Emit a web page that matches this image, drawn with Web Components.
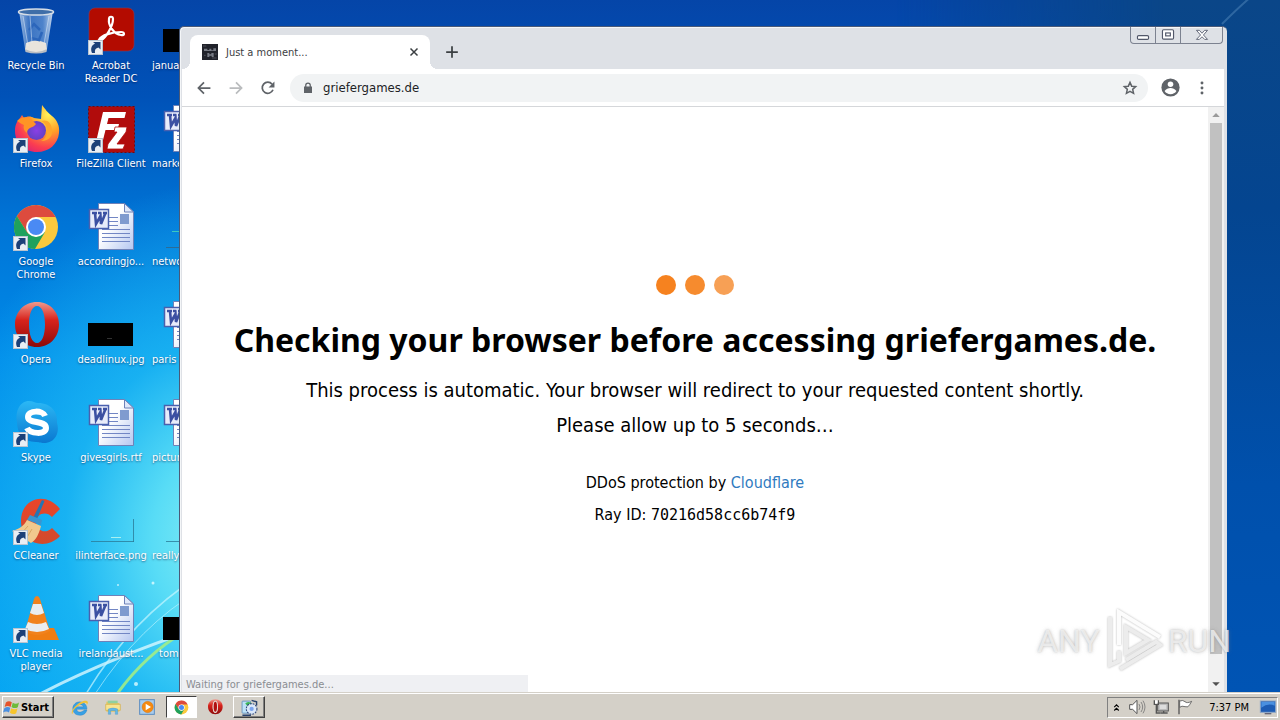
<!DOCTYPE html>
<html lang="en">
<head>
<meta charset="utf-8">
<title>Desktop</title>
<style>
html,body{margin:0;height:100%;overflow:hidden}
body{font-family:"Noto Sans",sans-serif}
</style>
</head>
<body>
<desk-top></desk-top>
<script>
const UI = '"DejaVu Sans Condensed","Noto Sans",sans-serif';
const ARROW = `<g><rect x="1.5" y="33.5" width="14" height="14" fill="#e9eef4" stroke="#b9c4d0"/><path d="M5 46c-2-5 0-8 3-9.500l-2-1.500h7.500v7.500l-2-2c-3 .5-4 2.500-3.500 5.500z" fill="#1c4078"/></g>`;
const CHROME = `<circle cx="24" cy="24" r="22" fill="#fbc93d"/><path d="M24 14H43.600A22 22 0 0 0 4.900 13L15.500 30z" fill="#dd4b3e"/><path d="M4.900 13A22 22 0 0 0 23 46L33 29 24 34 15.500 30z" fill="#1fa15d"/><circle cx="24" cy="24" r="10" fill="#fff"/><circle cx="24" cy="24" r="8" fill="#4a8af4"/>`;
const OPERA = `<defs><linearGradient id="o" x2="0" y2="1"><stop offset="0" stop-color="#f0998c"/><stop offset=".4" stop-color="#d8231c"/><stop offset="1" stop-color="#8d0a0a"/></linearGradient></defs><path fill-rule="evenodd" fill="url(#o)" d="M25 1c13 0 22 10 22 22.500S38 46 25 46 3 36 3 23.500 12 1 25 1zm0 4c-5 0-8 8-8 18.500S20 42 25 42s8-8 8-18.500S30 5 25 5z"/>`;
const ICONS = {
bin:`<defs><linearGradient id="g"><stop offset="0" stop-color="#cfe0f2" stop-opacity=".8"/><stop offset=".3" stop-color="#5f8fd0" stop-opacity=".6"/><stop offset=".7" stop-color="#7faadf" stop-opacity=".6"/><stop offset="1" stop-color="#e4edf6" stop-opacity=".9"/></linearGradient></defs><path d="M7 4h34l-6 38q-11 6-22 0z" fill="url(#g)"/><path d="M14 36q10-5 20 0l1 7q-11 5-22 0z" fill="#e8e4dc"/><path d="M13 42q11 6 22 0l-.500 3q-10 3-21 0z" fill="#b8bcc2"/><ellipse cx="24" cy="5" rx="17.500" ry="3" fill="#3f6ea8" stroke="#d5dde6" stroke-width="1.500"/><path d="M17 23l5-6 6 6m2 2-3 8-8-2" fill="none" stroke="#2c66bb" stroke-width="2.500"/><path d="M11 9l5 30M18 9l2 27M37 9l-5 28" stroke="#e8f1fb" stroke-opacity=".5"/>`,
acrobat:`<rect x="2" y="1" width="45" height="43" rx="6" fill="#b30b00" stroke="#8e3a52" stroke-opacity=".6"/><path d="M12 33c2-5 14-8 22-8 4 0 4 4 0 3-7-1-13-9-12-16 0-3 4-3 4 0 0 7-7 19-12 21-2 1-3 1-2 0z" fill="none" stroke="#fff" stroke-width="2.200"/>`+ARROW,
firefox:`<defs><radialGradient id="g" cx=".75" cy=".2" r=".95"><stop offset="0" stop-color="#fff35a"/><stop offset=".4" stop-color="#ffa128"/><stop offset=".75" stop-color="#fb3d50"/><stop offset="1" stop-color="#d81f78"/></radialGradient><radialGradient id="p"><stop offset="0" stop-color="#8a3fe6"/><stop offset="1" stop-color="#6541c4"/></radialGradient></defs><path d="M30 0c4 5 5 7 10 11 5 4 8 10 7 17-1 11-10 19-22 19C12 47 3 38 3 26c0-6 2-10 5-13l2-3 2 3c3-2 7-2 10 0l7 1z" fill="url(#g)"/><circle cx="24.500" cy="25.500" r="9.500" fill="url(#p)"/><path d="M5 16c4-4 9-5 14-2l5 5c-1 2-4 3-6 4-3 2-3 4-3 5-3-2-4-5-3-8-2-1-4-2-7-4z" fill="#ff9425"/><path d="M29 16c4 2 6 5 6 10 0 4-2 8-6 10 9 0 12-6 11-12-1-7-5-10-11-8z" fill="#ffa62b"/>`+ARROW,
filezilla:`<rect x="1.500" y="1.500" width="46" height="46" fill="#b10c0c" stroke="#7c0606" stroke-dasharray="2 2"/><path d="M16 7h23l-1.500 6H21.500l-1.500 6h12l-1.500 6h-12l-3 12H9z" fill="#fff"/><path d="M28 22h12l-1 5-9 12h8l-2 5H20l1-5 9-12h-3z" fill="#fff" stroke="#b10c0c" stroke-width=".800"/>`+ARROW,
chrome:CHROME+ARROW,
opera:OPERA+ARROW,
skype:`<defs><linearGradient id="g" x2="0" y2="1"><stop offset="0" stop-color="#2bb8f5"/><stop offset="1" stop-color="#0a78d0"/></linearGradient></defs><path d="M17 2c4 0 6 2 9 2 13 0 20 9 19 20 3 10-2 20-13 20-4 0-5-1-8-1C11 43 5 34 5 23 3 12 8 2 17 2z" fill="url(#g)"/><path d="M33 17c-2-6-17-6-17 1 0 7 18 3 18 11 0 7-16 6-19 0" fill="none" stroke="#fff" stroke-width="6"/>`+ARROW,
ccleaner:`<defs><linearGradient id="g" x2="0" y2="1"><stop offset="0" stop-color="#e8452a"/><stop offset="1" stop-color="#d24a2c"/></linearGradient></defs><path d="M48 12 40 20c-6-7-16-3-16 5s9 13 16 6l8 8C34 54 9 47 9 24 9 1 34-6 48 12z" fill="url(#g)"/><path d="M30 3l2.500 1-8 19-3.500-2z" fill="#2476b4"/><path d="M18 18l12 5-1 5-14-5z" fill="#3b95cf"/><path d="M15 23l14 6c-2 8-5 14-10 17L0 34c7-2 12-5 15-11z" fill="#f1c98d"/><path d="M8 38l8-9M14 42l6-10" stroke="#d8a864"/>`+ARROW,
vlc:`<path d="M9 33h33l5 12H8z" fill="#ef7d12"/><path d="M25 1q2 0 3 3l10 32q-13 8-25 0L22 4q1-3 3-3z" fill="#f1821c"/><path d="M21 9h8l3 9q-7 4-14 0zM16 27q9 4 18 0l3 7q-12 6-24 0z" fill="#e9edf0"/>`+ARROW,
word:`<defs><linearGradient id="g" x2="1" y2="1"><stop offset=".4" stop-color="#fff"/><stop offset="1" stop-color="#b4c6f0"/></linearGradient></defs><path d="M11.500.5h26l9 8.500v37.500h-35z" fill="url(#g)" stroke="#6f82b8"/><path d="M37.500.5V9h9z" fill="#dfe8fa" stroke="#6f82b8"/><path d="M22 14.500h9M22 18.500h9M22 22.500h9M15 26.500h28M15 30.500h28M15 34.500h28M15 38.500h28" stroke="#7286c4"/><rect x="33" y="11" width="9" height="10" fill="#7f9bcf"/><rect x="2.500" y="6.500" width="19" height="19" fill="#e8ecfa" stroke="#4a60ae" stroke-width="1.500"/><path d="M5 10h5m1 0h3m2 0h4M8 10l1 11 4.500-8 .5 8 4.500-11" stroke="#3b50a2" stroke-width="2.600" fill="none"/>`,
black:`<rect x="1" y="22" width="45" height="23" fill="#000"/><path d="M20 37.500h5" stroke="#333"/>`,
line:`<path d="M4 44.500h43M46.500 22v23" stroke="#2a7c98" stroke-opacity=".8" fill="none"/><path d="M24 40.500h10" stroke="#a8f0f0"/>`,
net:`<path d="M4 44.500h43" stroke="#2a6c98"/><path d="M10 28.500h30" stroke="#3cc8c0"/>`,
rawchrome:CHROME, rawopera:OPERA+`<ellipse cx="25" cy="23.500" rx="8" ry="18.500" fill="#e8d8d0"/><ellipse cx="25" cy="23.500" rx="5" ry="15" fill="#b01010"/>`,
flag:`<path d="M6 8q9-8 19-1l-4 15Q12 16 2 22z" fill="#e5532a"/><path d="M28 9q10 6 20-1l-4 15q-10 6-20-1z" fill="#6dbb3a"/><path d="M1 26q10-6 19-1l-4 15Q7 34-3 40z" fill="#4a8fe0"/><path d="M23 26q10 6 20 1l-4 15q-10 6-20-1z" fill="#f7c52c"/>`,
ie:`<path d="M38 31h7C42 42 34 46 25 46 13 46 5 38 5 27S14 8 25 8s21 9 20 21H16c1 5 4 8 9 8s7-2 13-6zM16 22h19c-1-4-4-6-9.500-6S17 18 16 22z" fill="#38a0e4" stroke="#1e78c0"/><path d="M3 42C-3 30 30-2 46 6c4 3 0 9-2 12 2-8-3-9-12-5C14 21 4 34 5 40z" fill="#f0c23a"/>`,
explorer:`<path d="M4 8h14l3 4h22v26H4z" fill="#e8c860"/><path d="M8 5h30v8H8z" fill="#8fd0a0"/><path d="M2 16h44v18H2z" fill="#f8e490" stroke="#d0ac48" stroke-width="2"/><path d="M10 46V30q14-6 28 0v16h-7V35H17v11z" fill="#62b8e8" stroke="#3a8cc0"/>`,
player:`<rect x="2" y="2" width="44" height="44" fill="#a9cdee" stroke="#5a8cc0" stroke-width="3"/><circle cx="26" cy="24" r="17" fill="#f58a12" stroke="#c8660a"/><path d="M20 14v20l16-10z" fill="#fff"/>`,
tool:`<rect x="3" y="6" width="24" height="34" rx="2" fill="#bfe3f7" stroke="#4a7fb8" stroke-width="2"/><path d="M12 12q12-8 20 2l4 8-14 4z" fill="#3fb85a"/><circle cx="30" cy="28" r="15" fill="#dbe8fa" stroke="#30487c" stroke-width="3" stroke-dasharray="5 3"/><circle cx="30" cy="28" r="6" fill="#7aa4ee"/><path d="M4 46h24M30 4l14 4v10" stroke="#26406c" stroke-width="4" fill="none"/>`,
favicon:`<rect width="48" height="48" fill="#20222a"/><path d="M6 14h10v4h6v-4h6v5h6v-6h8v8H6zM16 27h6v4h6v-4h7v12h-6v-4h-7v4h-6z" fill="#777b84"/><path d="M3 6h10M30 42h14M6 34h5M38 30h6" stroke="#4c4f58" stroke-width="3"/>`,
close:`<path d="M10 10 38 38M38 10 10 38" stroke="#3c4043" stroke-width="6"/>`,
plus:`<path d="M24 4v40M4 24h40" stroke="#3c4043" stroke-width="6"/>`,
back:`<path d="M46 24H6M24 5 5 24l19 19" fill="none" stroke="#5f6368" stroke-width="6"/>`,
fwd:`<path d="M2 24h40M24 5l19 19-19 19" fill="none" stroke="#babcbe" stroke-width="6"/>`,
reload:`<path d="M41 30A19 19 0 1 1 38 11" fill="none" stroke="#5f6368" stroke-width="6"/><path d="M46 2v20H26z" fill="#5f6368"/>`,
lock:`<path d="M8 18h32v26H8z" fill="#5f6368"/><path d="M15 20v-7a9 9 0 0 1 18 0v7" fill="none" stroke="#5f6368" stroke-width="5"/>`,
star:`<path d="m24 7 5 11.500 12 1-9 8.500 2.700 12L24 34l-10.700 6L16 28l-9-8.500 12-1z" fill="none" stroke="#5f6368" stroke-width="4.500"/>`,
user:`<circle cx="24" cy="24" r="23" fill="#5f6368"/><circle cx="24" cy="16" r="7" fill="#fff"/><path d="M9 33q6-8 15-8t15 8q-5 8-15 8T9 33z" fill="#fff"/>`,
dots:`<g fill="#5f6368"><circle cx="24" cy="7" r="5"/><circle cx="24" cy="24" r="5"/><circle cx="24" cy="41" r="5"/></g>`,
min:`<rect x="5" y="26" width="38" height="13" rx="4" fill="#fff" stroke="#52586a" stroke-width="4"/>`,
max:`<rect x="5" y="6" width="38" height="32" rx="4" fill="#fff" stroke="#52586a" stroke-width="4"/><rect x="16" y="17" width="16" height="10" fill="#fff" stroke="#52586a" stroke-width="4"/>`,
x:`<path d="M5 8h10l9 10 9-10h10L29 24l14 15H33l-9-9-9 9H5l14-15z" fill="#fff" stroke="#52586a" stroke-width="3"/>`,
up:`<path d="M24 14 42 34H6z" fill="#9a9a9a"/>`,
down:`<path d="M24 34 42 16H6z" fill="#505050"/>`,
chev:`<path d="m12 22 12-12 12 12M12 40l12-12 12 12" fill="none" stroke="#000" stroke-width="6"/>`,
sound:`<path d="M2 17h9L24 4v40L11 31H2z" fill="#fff" stroke="#555" stroke-width="3"/><path d="M30 15q6 9 0 18M36 9q10 15 0 30M42 5q12 19 0 38" fill="none" stroke="#777" stroke-width="2.500"/>`,
lan:`<rect x="14" y="12" width="32" height="24" fill="#bbb" stroke="#555" stroke-width="3"/><path d="M20 18h20v12H20z" fill="#ddd"/><path d="M22 42h22M32 36v6" stroke="#555" stroke-width="4"/><path d="M4 4v12h12V4M10 16v26h12" fill="none" stroke="#555" stroke-width="4"/><path d="M6 4h8v10H6z" fill="#fff"/>`,
pennant:`<path d="M6 2v44" stroke="#555" stroke-width="4"/><path d="M8 6q10-4 16 2t20-1l-6 10q-4 10-14 6T8 25z" fill="#fff" stroke="#555" stroke-width="2.500"/>`,
desk:`<rect x="1" y="6" width="46" height="34" fill="#1d5cb4" stroke="#8fa8c8" stroke-width="3"/><path d="M4 26Q24 10 44 20V9H4z" fill="#4a90e0"/><path d="M14 44h20" stroke="#667" stroke-width="4"/>`
};
function define(name, html, setup){
  const t=document.createElement('template'); t.innerHTML=html;
  customElements.define(name,class extends HTMLElement{
    constructor(){super();this.attachShadow({mode:'open'}).append(t.content.cloneNode(true));}
    connectedCallback(){if(setup&&!this.ready){this.ready=true;setup.call(this,this.shadowRoot);}}
  });
}
define('app-glyph',`<style>:host{display:block;flex:none;width:var(--s,16px);height:var(--s,16px)}svg{display:block;width:100%;height:100%;overflow:visible}</style><svg viewBox="0 0 48 48" aria-hidden="true"></svg>`,
 function(r){r.querySelector('svg').innerHTML=ICONS[this.getAttribute('name')];
  if(this.hasAttribute('size'))this.style.setProperty('--s',this.getAttribute('size')+'px');});

define('desktop-icon',`<style>
:host{display:block;min-width:0}
button{all:unset;display:flex;flex-direction:column;align-items:center;gap:4px;width:100%;font:11px/13px ${UI};color:#fff;text-align:center;text-shadow:0 1px 2px #0038}
:host([cut]) span{align-self:flex-start;margin-left:2px}
:host([inset]) span{margin-left:9px}
</style><button type="button"><span><slot></slot></span></button>`,
 function(r){const g=document.createElement('app-glyph');g.setAttribute('name',this.getAttribute('icon'));g.setAttribute('size','48');r.querySelector('button').prepend(g);});

define('wall-paper',`<style>:host{display:block;position:absolute;inset:0;overflow:hidden;
background:radial-gradient(ellipse 300px 360px at 230px 540px,#8af0f4 0,#58dcf6 26%,#20bcf4c0 55%,#00a0ec00 100%),linear-gradient(180deg,#0545a8 0,#0052b8 14%,#0074d6 32%,#008cea 52%,#00a0f2 100%)}
.r{position:absolute;inset:0 0 0 auto;width:30%;background:linear-gradient(180deg,#0a4688 0,#044590 30%,#0050ac 70%,#0054b4 100%);-webkit-mask:linear-gradient(90deg,#0000,#000 70%);mask:linear-gradient(90deg,#0000,#000 70%)}
svg{position:absolute;left:0;bottom:0}.t{left:auto;bottom:auto;right:0;top:0}</style><div class="r"></div>
<svg width="200" height="160" viewBox="0 532 200 160" fill="none"><path d="M40 694Q110 658 200 628" stroke="#d8f8ff" stroke-width="3" stroke-opacity=".8"/><path d="M86 694Q130 620 200 575" stroke="#c8f6ff" stroke-opacity=".7" stroke-width="1.500"/><path d="M95 694Q140 625 200 590" stroke="#c8f6ff" stroke-opacity=".6"/><path d="M117 694Q145 655 184 632" stroke="#a8f080" stroke-width="3" stroke-opacity=".85"/><g fill="#e0fbff" fill-opacity=".8"><circle cx="153" cy="583" r="1.500"/><circle cx="136" cy="684" r="2"/><circle cx="118" cy="585" r="1"/></g></svg>
<svg class="t" width="160" height="30" viewBox="0 0 160 30"><path d="M102 24Q120 6 132-4" stroke="#5a90c0" stroke-width="2" stroke-opacity=".45" fill="none"/></svg>`);

define('browser-window',`<style>
:host{display:flex;flex-direction:column;box-sizing:border-box;background:#dee1e6;border:solid #4a5a78;border-width:1px 0 0 1px;border-radius:5px 5px 0 0;box-shadow:inset 1px 1px #f4f6f8;padding:0 3px 0 2px;font-family:${UI};overflow:hidden}
button{all:unset;display:flex;align-items:center;justify-content:center}
header{display:flex;align-items:flex-end;height:42px;padding-left:8px;flex:none}
.tab{display:flex;align-items:center;width:240px;height:34px;box-sizing:border-box;padding:0 10px 0 12px;background:#fff;border-radius:8px 8px 0 0;position:relative;font-size:11px;color:#3c4043}
.tab::before,.tab::after{content:"";position:absolute;bottom:0;width:8px;height:8px}
.tab::before{left:-8px;background:radial-gradient(circle at 0 0,#0000 8px,#fff 8px)}
.tab::after{right:-8px;background:radial-gradient(circle at 100% 0,#0000 8px,#fff 8px)}
.tab span{flex:1;margin-left:8px}
.new{width:28px;height:34px;margin-left:8px}
.caps{display:flex;margin-left:auto;align-self:flex-start;border:1px solid #7c8290;border-top:0;border-radius:0 0 4px 4px;height:16px;margin-right:1px}
.caps button{width:24px}.caps button+button{border-left:1px solid #7c8290}.caps button:last-child{width:41px}
nav{display:flex;align-items:center;height:37px;flex:none;background:#fff;border-bottom:1px solid #d5d7da;padding:0 6px}
nav>button{width:32px;height:28px}
label{display:flex;align-items:center;flex:1;height:28px;border-radius:14px;background:#f1f3f4;margin:0 6px;padding:0 10px 0 12px;box-sizing:border-box}
input{all:unset;flex:1;min-width:0;font:13px/20px ${UI};color:#202124;margin-left:9px}
.view{flex:1;display:flex;min-height:0;background:#fff;position:relative}
slot{display:block;flex:1}
.bar{width:16px;background:#f1f1f1;display:flex;flex-direction:column;align-items:center;flex:none}
.bar app-glyph{margin:3px 0}.thumb{flex:1;width:12px;background:#c1c1c1;margin-bottom:22px}
.status{position:absolute;left:0;bottom:0;width:346px;height:17px;box-sizing:border-box;background:#eff0f3;color:#8a8d92;font-size:11px;line-height:20px;padding-left:4px}
</style>
<header><div class="tab"><app-glyph name="favicon" size="16"></app-glyph><span>Just a moment...</span><button type="button" aria-label="Close tab"><app-glyph name="close" size="12"></app-glyph></button></div>
<button class="new" type="button" aria-label="New tab"><app-glyph name="plus" size="14"></app-glyph></button>
<div class="caps"><button type="button" aria-label="Minimize"><app-glyph name="min" size="14"></app-glyph></button><button type="button" aria-label="Maximize"><app-glyph name="max" size="14"></app-glyph></button><button type="button" aria-label="Close"><app-glyph name="x" size="14"></app-glyph></button></div></header>
<nav><button type="button" aria-label="Back"><app-glyph name="back" size="14"></app-glyph></button><button type="button" aria-label="Forward"><app-glyph name="fwd" size="14"></app-glyph></button><button type="button" aria-label="Reload"><app-glyph name="reload" size="14"></app-glyph></button>
<label><app-glyph name="lock" size="12"></app-glyph><input aria-label="Address" value="griefergames.de"><button type="button" aria-label="Bookmark"><app-glyph name="star" size="16"></app-glyph></button></label>
<button type="button" aria-label="Profile"><app-glyph name="user" size="19"></app-glyph></button><button type="button" aria-label="Menu"><app-glyph name="dots" size="14"></app-glyph></button></nav>
<div class="view"><slot></slot><div class="bar"><app-glyph name="up" size="10"></app-glyph><div class="thumb"></div><app-glyph name="down" size="10"></app-glyph></div><div class="status">Waiting for griefergames.de...</div></div>`);

define('check-page',`<style>
:host{display:flex;flex-direction:column;align-items:center;color:#000;font-family:${UI};padding-top:168px;white-space:nowrap}
.dots{display:flex;gap:9px}i{width:20px;height:20px;border-radius:50%;background:#f6821f}i:nth-child(2){background:#f68b2e}i:nth-child(3){background:#f7a055}
h1{font:bold 32px/40px "Noto Sans",sans-serif;margin:25px 0 13px}
p{margin:0;font-size:20px;line-height:35px}
small{font-size:16px;line-height:32px}.f{margin-top:24px}a{color:#2f7bbf;text-decoration:none}code{font:15px/30px "DejaVu Sans Mono",monospace}
</style><div class="dots"><i></i><i></i><i></i></div>
<h1>Checking your browser before accessing griefergames.de.</h1>
<p>This process is automatic. Your browser will redirect to your requested content shortly.</p><p>Please allow up to 5 seconds…</p>
<small class="f">DDoS protection by <a href="#">Cloudflare</a></small><small>Ray ID: <code>70216d58cc6b74f9</code></small>`);

define('task-bar',`<style>
:host{display:flex;align-items:center;box-sizing:border-box;height:28px;padding:2px 2px 0;background:#d4d0c8;box-shadow:inset 0 1px #d4d0c8,inset 0 2px #fff;font-family:${UI};font-size:11px;color:#000;position:relative}
button{all:unset;box-sizing:border-box;display:flex;align-items:center;justify-content:center;height:22px}
.up{border:1px solid;border-color:#fff #404040 #404040 #fff;box-shadow:inset -1px -1px #808080}
.start{width:52px;font-weight:bold;gap:2px;padding-right:3px}
.q{width:32px;margin-right:2px}.apps{display:flex;margin-left:9px}
.on{width:31px;background:#fff;border:1px solid;border-color:#404040 #fff #fff #404040;margin:0 2px 0 1px}
.tray{display:flex;align-items:center;gap:8px;margin-left:auto;height:21px;box-sizing:border-box;border:1px solid;border-color:#808080 #fff #fff #808080;padding:0 1px 0 4px}
time{margin:0 3px 0 8px}
</style><button class="start up" type="button"><app-glyph name="flag" size="15"></app-glyph>Start</button>
<div class="apps"><button class="q" type="button" aria-label="Internet Explorer"><app-glyph name="ie" size="17"></app-glyph></button><button class="q" type="button" aria-label="Explorer"><app-glyph name="explorer" size="16"></app-glyph></button><button class="q" type="button" aria-label="Media Player"><app-glyph name="player" size="16"></app-glyph></button><button class="on" type="button" aria-label="Chrome"><app-glyph name="rawchrome" size="15"></app-glyph></button><button class="q" type="button" aria-label="Opera"><app-glyph name="rawopera" size="16"></app-glyph></button><button class="q up" type="button" aria-label="Settings"><app-glyph name="tool" size="17"></app-glyph></button></div>
<div class="tray"><app-glyph name="chev" size="9"></app-glyph><app-glyph name="sound" size="16"></app-glyph><app-glyph name="lan" size="16"></app-glyph><app-glyph name="pennant" size="16"></app-glyph><time>7:37 PM</time><app-glyph name="desk" size="16"></app-glyph></div>`);

define('water-mark',`<style>:host{display:flex;align-items:center;gap:4px;font:32px/40px Roboto,sans-serif;color:#f4f4f4cc;text-shadow:0 0 2px #8886,0 0 4px #8886;pointer-events:none}svg{display:block;filter:drop-shadow(0 0 1px #8889)}</style><span>ANY</span><svg width="60" height="64" viewBox="0 0 60 64" fill="none" stroke="#fcfcfc" stroke-width="4"><path d="M15 36V3l41 25"/><path d="M6 8v48l9-4V42M16 60 56 36 52 33 22 51M22 18v26l22-13z" stroke="#ececec"/></svg><span>RUN</span>`);

define('desk-top',`<style>
:host{display:flex;flex-direction:column;height:100vh;overflow:hidden}
main{flex:1;min-height:0;position:relative;overflow:hidden}
.grid{position:relative;display:grid;grid-template-columns:repeat(3,72px);grid-auto-rows:98px;column-gap:3px;padding-top:7px}
browser-window{position:absolute;left:179px;right:53px;top:26px;bottom:0}
water-mark{position:absolute;right:49px;bottom:19px}
</style><main><wall-paper></wall-paper><div class="grid">
<desktop-icon icon="bin">Recycle Bin</desktop-icon><desktop-icon icon="acrobat">Acrobat Reader DC</desktop-icon><desktop-icon icon="black" cut>janua</desktop-icon>
<desktop-icon icon="firefox">Firefox</desktop-icon><desktop-icon icon="filezilla">FileZilla Client</desktop-icon><desktop-icon icon="word" cut>marke</desktop-icon>
<desktop-icon icon="chrome">Google Chrome</desktop-icon><desktop-icon icon="word">accordingjo...</desktop-icon><desktop-icon icon="net" cut>netwo</desktop-icon>
<desktop-icon icon="opera">Opera</desktop-icon><desktop-icon icon="black">deadlinux.jpg</desktop-icon><desktop-icon icon="word" cut>paris</desktop-icon>
<desktop-icon icon="skype">Skype</desktop-icon><desktop-icon icon="word">givesgirls.rtf</desktop-icon><desktop-icon icon="word" cut>pictur</desktop-icon>
<desktop-icon icon="ccleaner">CCleaner</desktop-icon><desktop-icon icon="line">ilinterface.png</desktop-icon><desktop-icon icon="line" cut>really</desktop-icon>
<desktop-icon icon="vlc">VLC media player</desktop-icon><desktop-icon icon="word">irelandaust...</desktop-icon><desktop-icon icon="black" cut inset>tom</desktop-icon>
</div><browser-window><check-page></check-page></browser-window><water-mark></water-mark></main><task-bar></task-bar>`);
</script>
</body>
</html>
